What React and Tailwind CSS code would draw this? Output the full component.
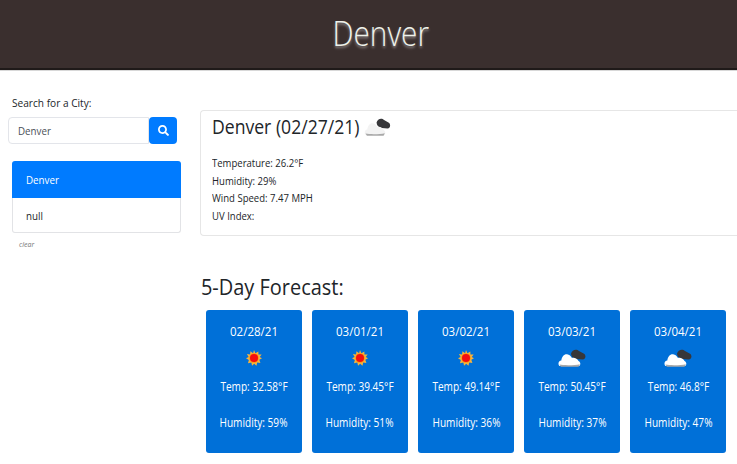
import React from "react";
import { FaSearch } from "react-icons/fa";

const forecast = [
  { date: "02/28/21", icon: "sun", temp: "32.58", humidity: 59 },
  { date: "03/01/21", icon: "sun", temp: "39.45", humidity: 51 },
  { date: "03/02/21", icon: "sun", temp: "49.14", humidity: 36 },
  { date: "03/03/21", icon: "cloud", temp: "50.45", humidity: 37 },
  { date: "03/04/21", icon: "cloud", temp: "46.8", humidity: 47 },
];

const SunIcon = () => (
  <svg width="16" height="16" viewBox="0 0 18 18">
    <path
      d="M9 0 L10.6 3.6 L13.9 1.6 L14 5 L17.6 5 L15.4 8 L18 9.4 L15 11 L16.2 14.6 L12.6 14 L11.8 17.6 L9.2 15.4 L6.8 17.6 L6 14 L2.2 15 L3.2 11.2 L0 9.4 L3 8 L1 4.6 L4.6 5 L5 1.4 L8 3.6 Z"
      fill="#f7b23c"
    />
    <circle cx="9" cy="9" r="5.4" fill="#f59a10" />
    <circle cx="9" cy="9" r="4.5" fill="#f50d0d" />
  </svg>
);

const CloudIcon = ({ faded }) => (
  <svg width="30" height="18" viewBox="0 0 30 18">
    <path d="M14 4.5 C15 0.5 20 -0.5 22.5 2 L27.5 4.5 C30.5 6 30 10.5 26.5 10.5 L20 10 C16.5 9.5 14 7.5 14 4.5 Z" fill="#37373a" />
    <path
      d="M1.5 17 C-0.5 15.5 0.5 11.5 3.5 11.5 C4 7.5 7 4.5 10.5 5.5 C13 6 14 7.5 15 9 C17 8 21 9.5 22 12 C24.5 13 24.5 16 22.5 17 Z"
      fill={faded ? "#f3f3f3" : "#ffffff"}
    />
    <path d="M1.5 15.6 C6 16.4 18 16.4 23.4 15.2 L22 17.8 L3 17.8 Z" fill="#a9a9a9" />
  </svg>
);

const ForecastCard = ({ day }) => (
  <div className="flex h-[143px] flex-col items-center rounded-[3px] bg-[#0070d8] pt-[13px] text-[12px] leading-[17px] text-white">
    <p className="scale-x-[0.96]">{day.date}</p>
    <div className="mt-[7px] flex h-[22px] items-center justify-center">
      {day.icon === "sun" ? <SunIcon /> : <div className="scale-x-[0.93]"><CloudIcon /></div>}
    </div>
    <p className="mt-[9px] scale-x-[0.84] whitespace-nowrap">Temp: {day.temp}°F</p>
    <p className="mt-[19px] scale-x-[0.84] whitespace-nowrap">Humidity: {day.humidity}%</p>
  </div>
);

export default function App() {
  return (
    <div className="h-[464px] w-[737px] overflow-hidden bg-white font-['Open_Sans',sans-serif] text-[#212529]">
      {/* Header */}
      <header className="flex h-[70px] items-center justify-center border-b-2 border-b-[#1f1a19] bg-[#3a2f2e] pb-[2px] pl-[24px] shadow-[0_1px_0_#d8d8d8]">
        <h1 className="scale-x-[0.85] text-[35px] font-light text-[#eef2ea] [text-shadow:0_2px_3px_rgba(255,255,255,0.45)]">Denver</h1>
      </header>

      <div className="flex">
        {/* Sidebar */}
        <aside className="w-[200px] shrink-0 pt-[25px] pl-[8px]">
          <label className="ml-[4px] block origin-left scale-x-[0.88] text-[11.5px] leading-[16px]">Search for a City:</label>
          <div className="mt-[6px] flex h-[27px] w-[169px]">
            <div className="flex h-full w-[141px] items-center rounded-l-[4px] border border-[#e3e5ea] pl-[9px] text-[11.5px] text-[#495057]">
              <span className="origin-left scale-x-[0.85]">Denver</span>
            </div>
            <button className="flex h-full w-[28px] items-center justify-center rounded-[4px] bg-[#007bff] text-white">
              <FaSearch size={11} />
            </button>
          </div>
          <ul className="mt-[17px] ml-[4px] w-[169px] text-[11.5px]">
            <li className="flex h-[37px] items-center rounded-t-[3px] bg-[#007bff] pl-[14px] text-white">
              <span className="origin-left scale-x-[0.85]">Denver</span>
            </li>
            <li className="flex h-[35px] items-center rounded-b-[3px] border border-t-0 border-[#e2e3e6] pt-[1px] pl-[13px]">
              <span className="origin-left scale-x-[0.85]">null</span>
            </li>
          </ul>
          <p className="mt-[7px] ml-[11px] text-[7px] leading-[10px] text-[#777] italic">clear</p>
        </aside>

        {/* Main */}
        <main className="min-w-0 flex-1 pt-[40px]">
          <section className="h-[126px] rounded-l-[4px] border border-r-0 border-[#e6e6e6] pl-[11px]">
            <h2 className="flex origin-left scale-x-[0.88] items-center gap-[5px] pt-[2px] text-[20px] leading-[28px]">
              Denver (02/27/21) <CloudIcon faded />
            </h2>
            <div className="mt-[13px] origin-left scale-x-[0.83] text-[11.5px] leading-[17.5px]">
              <p>Temperature: 26.2°F</p>
              <p>Humidity: 29%</p>
              <p>Wind Speed: 7.47 MPH</p>
              <p>UV Index:</p>
            </div>
          </section>

          <h3 className="mt-[35px] origin-left scale-x-[0.95] pl-[1px] text-[21px] leading-[32px]">5-Day Forecast:</h3>
          <div className="mt-[7px] ml-[6px] grid w-[520px] grid-cols-5 gap-[10.5px]">
            {forecast.map((day) => (
              <ForecastCard key={day.date} day={day} />
            ))}
          </div>
        </main>
      </div>
    </div>
  );
}
